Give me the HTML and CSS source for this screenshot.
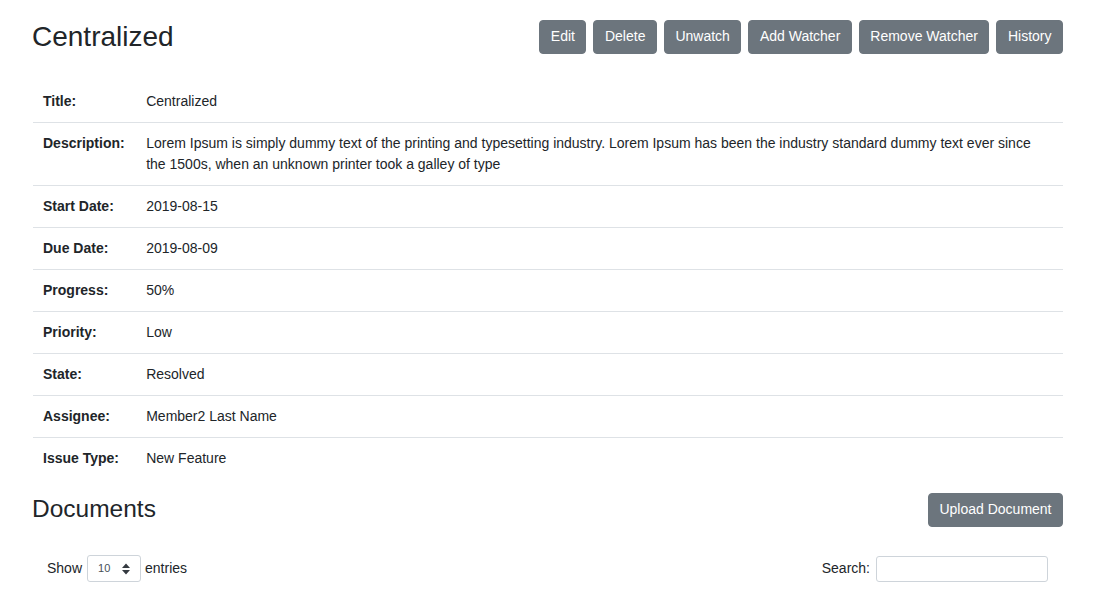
FILE: index.html
```html
<!DOCTYPE html>
<html>
<head>
<meta charset="utf-8">
<link rel="stylesheet" href="styles.css">
</head>
<body>
<div class="page">
  <div class="header">
    <h2 class="title">Centralized</h2>
    <div class="actions">
      <button class="btn">Edit</button>
      <button class="btn">Delete</button>
      <button class="btn">Unwatch</button>
      <button class="btn">Add Watcher</button>
      <button class="btn">Remove Watcher</button>
      <button class="btn">History</button>
    </div>
  </div>
  <table class="details">
    <tr><td class="label">Title:</td><td>Centralized</td></tr>
    <tr><td class="label">Description:</td><td>Lorem Ipsum is simply dummy text of the printing and typesetting industry. Lorem Ipsum has been the industry standard dummy text ever since the 1500s, when an unknown printer took a galley of type</td></tr>
    <tr><td class="label">Start Date:</td><td>2019-08-15</td></tr>
    <tr><td class="label">Due Date:</td><td>2019-08-09</td></tr>
    <tr><td class="label">Progress:</td><td>50%</td></tr>
    <tr><td class="label">Priority:</td><td>Low</td></tr>
    <tr><td class="label">State:</td><td>Resolved</td></tr>
    <tr><td class="label">Assignee:</td><td>Member2 Last Name</td></tr>
    <tr><td class="label">Issue Type:</td><td>New Feature</td></tr>
  </table>
  <div class="header docs-header">
    <h3 class="subtitle">Documents</h3>
    <button class="btn">Upload Document</button>
  </div>
  <div class="dt-controls">
    <div class="length">
      <span>Show</span>
      <div class="select-sm"><span>10</span>
        <svg width="10" height="14" viewBox="0 0 10 14"><path d="M1 6 L5 1.5 L9 6 Z M1 8 L5 12.5 L9 8 Z" fill="#343a40"/></svg>
      </div>
      <span>entries</span>
    </div>
    <div class="search">
      <span>Search:</span>
      <div class="input-sm"></div>
    </div>
  </div>
</div>
</body>
</html>
```
FILE: styles.css
```css
html { font-size: 14px; }
body {
  margin: 0;
  font-family: "Liberation Sans", Arial, sans-serif;
  font-size: 14px;
  line-height: 1.5;
  color: #212529;
  background: #fff;
}
.page {
  padding: 20px 34px 0 33px;
}
.header {
  display: flex;
  justify-content: space-between;
  align-items: center;
}
.title {
  margin: 0;
  font-size: 28px;
  font-weight: 400;
  line-height: 33px;
  color: #212529;
  position: relative;
  top: -1px;
  left: -1px;
}
.subtitle {
  margin: 0;
  font-size: 24.5px;
  font-weight: 400;
  line-height: 33px;
  color: #212529;
  position: relative;
  top: -2px;
  left: -1px;
}
.actions {
  display: flex;
  gap: 7px;
}
.btn {
  font-family: inherit;
  font-size: 14px;
  line-height: 21px;
  padding: 5px 10.5px 6px;
  border: 1px solid #6c757d;
  background: #6c757d;
  color: #fff;
  border-radius: 4px;
  cursor: pointer;
  white-space: nowrap;
}
.details {
  width: 100%;
  border-collapse: collapse;
  margin-top: 26px;
  margin-bottom: 14px;
}
.details td {
  padding: 10px 10.5px;
  border-top: 1px solid #dee2e6;
  vertical-align: top;
  line-height: 21px;
}
.details tr:first-child td {
  border-top: 1px solid transparent;
}
.details td.label {
  width: 1%;
  white-space: nowrap;
  font-weight: 700;
  padding-left: 10px;
  padding-right: 11px;
}
.dt-controls {
  display: flex;
  justify-content: space-between;
  align-items: center;
  padding: 0 15px 0 14px;
  margin-top: 28px;
}
.length, .search {
  display: flex;
  align-items: center;
}
.select-sm {
  display: flex;
  align-items: center;
  justify-content: space-between;
  box-sizing: border-box;
  width: 54px;
  height: 27px;
  margin: 0 4px 0 5px;
  padding: 0 9px 0 10px;
  border: 1px solid #ced4da;
  border-radius: 3px;
  font-size: 11px;
  color: #495057;
}
.input-sm {
  box-sizing: border-box;
  width: 172px;
  height: 26px;
  margin-left: 6px;
  border: 1px solid #ced4da;
  border-radius: 3px;
}
```
